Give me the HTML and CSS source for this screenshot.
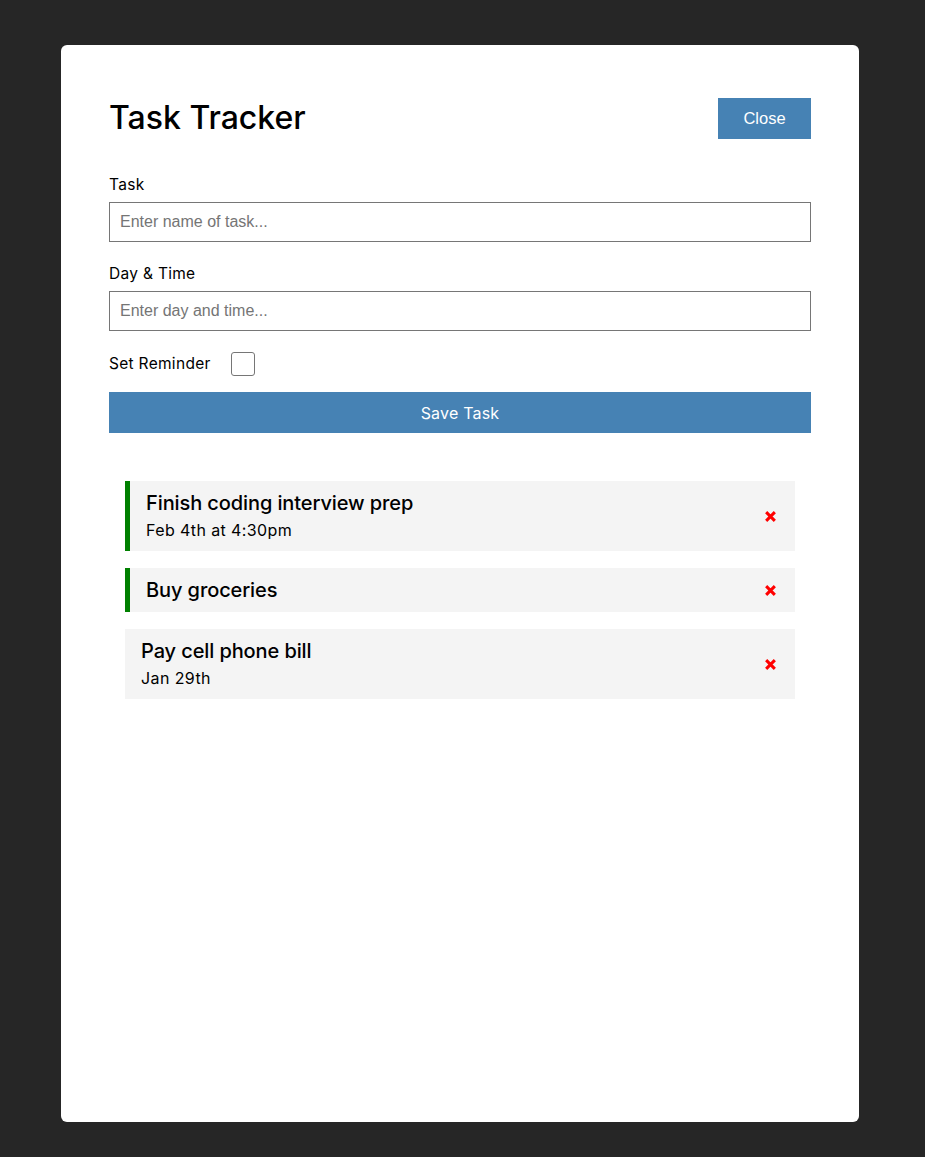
FILE: index.html
```html
<!DOCTYPE html>
<html lang="en">
<head>
<meta charset="utf-8">
<title>Task Tracker</title>
<link rel="stylesheet" href="styles.css">
</head>
<body>
<div class="container">
  <header class="header">
    <h1>Task Tracker</h1>
    <button class="btn btn-close">Close</button>
  </header>
  <form class="add-form">
    <div class="form-control">
      <label>Task</label>
      <input type="text" placeholder="Enter name of task...">
    </div>
    <div class="form-control">
      <label>Day &amp; Time</label>
      <input type="text" placeholder="Enter day and time...">
    </div>
    <div class="form-control form-check">
      <label>Set Reminder</label>
      <span class="checkbox"></span>
    </div>
    <button type="button" class="btn btn-block">Save Task</button>
  </form>
  <div class="tasks">
    <div class="task reminder">
      <div class="task-text">
        <h3>Finish coding interview prep</h3>
        <p>Feb 4th at 4:30pm</p>
      </div>
      <svg class="del" viewBox="0 0 12 12" width="12" height="12"><path d="M2 2 L10 10 M10 2 L2 10" stroke="#ff0000" stroke-width="2.8" stroke-linecap="butt"/></svg>
    </div>
    <div class="task reminder">
      <div class="task-text">
        <h3>Buy groceries</h3>
      </div>
      <svg class="del" viewBox="0 0 12 12" width="12" height="12"><path d="M2 2 L10 10 M10 2 L2 10" stroke="#ff0000" stroke-width="2.8" stroke-linecap="butt"/></svg>
    </div>
    <div class="task">
      <div class="task-text">
        <h3>Pay cell phone bill</h3>
        <p>Jan 29th</p>
      </div>
      <svg class="del" viewBox="0 0 12 12" width="12" height="12"><path d="M2 2 L10 10 M10 2 L2 10" stroke="#ff0000" stroke-width="2.8" stroke-linecap="butt"/></svg>
    </div>
  </div>
</div>
</body>
</html>
```
FILE: styles.css
```css
* { box-sizing: border-box; margin: 0; padding: 0; }
body {
  background: #262626;
  font-family: Inter, "Open Sans", sans-serif;
  color: #000;
  padding: 45px 0 35px 61px;
}
.container {
  width: 798px;
  min-height: 1077px;
  background: #fff;
  border-radius: 6px;
  padding: 52px 48px 48px;
}
.header {
  display: flex;
  justify-content: space-between;
  align-items: center;
  margin-bottom: 35px;
}
.header h1 {
  font-size: 32px;
  font-weight: 500;
  letter-spacing: 0;
  line-height: 42px;
}
.btn {
  background: #4682b4;
  color: #fff;
  border: none;
  font-size: 16px;
  cursor: pointer;
}
.btn-close {
  width: 93px;
  height: 41px;
  font-family: "Liberation Sans", Arial, sans-serif;
  font-size: 16.5px;
}
.form-control { margin-bottom: 21px; }
.form-control label {
  display: block;
  font-size: 15.5px;
  letter-spacing: 0.3px;
  line-height: 22px;
  margin-bottom: 6px;
}
.form-control input {
  width: 100%;
  height: 40px;
  border: 1px solid #767676;
  padding: 0 10px;
  font-family: "Liberation Sans", Arial, sans-serif;
  font-size: 16px;
  outline: none;
}
.form-control input::placeholder { color: #757575; }
.form-check {
  display: flex;
  align-items: center;
  margin-bottom: 16px;
}
.form-check label { margin: 0 20px 0 0; }
.checkbox {
  width: 24px;
  height: 24px;
  border: 1px solid #767676;
  border-radius: 3px;
}
.btn-block {
  display: block;
  width: 100%;
  height: 41px;
  font-family: Inter, "Open Sans", sans-serif;
  font-size: 16px;
  letter-spacing: 0.2px;
}
.tasks {
  margin-top: 48px;
  padding: 0 16px;
  display: flex;
  flex-direction: column;
  gap: 17px;
}
.task {
  background: #f4f4f4;
  display: flex;
  justify-content: space-between;
  align-items: center;
  padding: 10px 16px 9px 16px;
}
.task.reminder { border-left: 5px solid #008000; }
.task h3 {
  font-size: 20px;
  font-weight: 500;
  line-height: 25px;
  letter-spacing: -0.1px;
}
.task p {
  font-size: 16px;
  letter-spacing: 0.4px;
  line-height: 24px;
  margin-top: 2px;
}
.del { margin-right: 2px; width: 13px; height: 13px; }
```
